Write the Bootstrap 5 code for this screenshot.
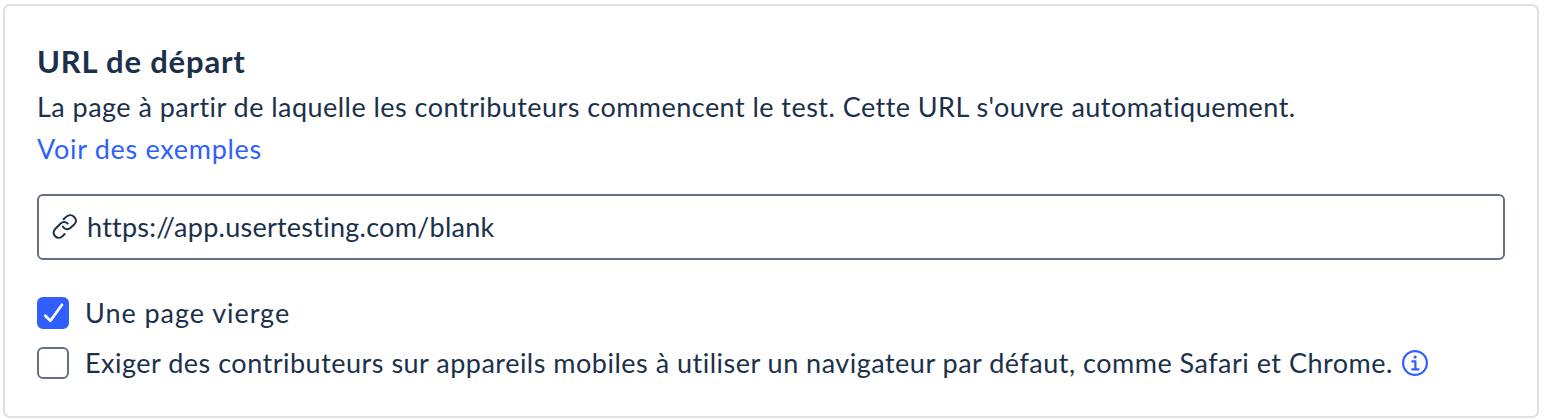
<!DOCTYPE html>
<html lang="fr"><head><meta charset="utf-8"><title>URL de départ</title>
<link href="https://cdn.jsdelivr.net/npm/bootstrap@5.3.0/dist/css/bootstrap.min.css" rel="stylesheet">
<style>
body{background:#fff;color:#1b314b;font-family:Lato,"Open Sans",sans-serif;font-size:27px;line-height:42px;font-variant-ligatures:none;overflow:hidden}
.start-url{margin:4px 5px 2px 3px;height:414px;border:2px solid #dfdfe5;border-radius:7px;padding:34px 32px 0;color:inherit}
.title{font-size:31px;line-height:42px;font-weight:700;letter-spacing:.83px;margin:0 0 4px}
.desc{letter-spacing:.46px}
.examples{color:#315fff;letter-spacing:.7px}
.url-field{height:66px;margin:24px 0 32px;border:2px solid #657086;border-radius:6px;padding:0 13px;font-size:27px;line-height:42px;color:inherit;gap:9px}
.url-text{letter-spacing:.25px}
.option{gap:16px;height:42px}
.option .form-check-input{width:32px;height:32px;margin:0;border:2px solid #657086;border-radius:6px;flex:none}
.option .form-check-input:checked{background-color:#315fff;border-color:#315fff;background-image:none}
.box{width:32px;height:32px}
.tick{position:absolute;left:0;top:0;pointer-events:none}
.opt-a{letter-spacing:.95px}
.opt-b{letter-spacing:.495px}
.info{margin-left:-7px}
</style></head><body>
<main class="card start-url">
<h2 class="title">URL de départ</h2>
<div class="text-nowrap"><span class="desc">La page à partir de laquelle les contributeurs commencent le test. Cette URL s'ouvre automatiquement.</span></div>
<div><a href="#" class="examples text-decoration-none">Voir des exemples</a></div>
<div class="form-control url-field d-flex align-items-center">
<svg width="26" height="26" viewBox="0 0 26 26" fill="none" stroke="#1b314b" stroke-width="2" stroke-linecap="round" stroke-linejoin="round" aria-hidden="true"><path d="M11.6 5.3L13.8 3.1C16.2.7 19.6.4 22 2.7C24.6 5.2 24.6 8 22.2 10.4L18.6 13.8C16 16.2 12.6 15.7 10.8 12.6"/><path d="M15.7 9.6C13.4 7.6 10.6 7.6 8.4 9.8L3.4 14.8C1 17.2 1 20.2 3.2 22.3C5.4 24.5 8.4 24.3 10.6 22.1L12.6 20"/></svg>
<span class="url-text">https://app.usertesting.com/blank</span>
</div>
<div class="option d-flex align-items-center mb-2">
<span class="box position-relative d-flex"><input class="form-check-input" type="checkbox" id="blank" checked><svg class="tick" width="32" height="32" fill="none" stroke="#fff" stroke-width="2.7" stroke-linecap="round" stroke-linejoin="round" aria-hidden="true"><path d="M8.3 18.7L13.4 23.8L25 7.8"/></svg></span>
<label for="blank" class="opt-a">Une page vierge</label>
</div>
<div class="option d-flex align-items-center">
<input class="form-check-input" type="checkbox" id="browser">
<label for="browser" class="opt-b text-nowrap">Exiger des contributeurs sur appareils mobiles à utiliser un navigateur par défaut, comme Safari et Chrome.</label>
<svg class="info" width="26" height="26" viewBox="0 0 26 26" fill="none" stroke="#315fff" stroke-width="2.2" stroke-linecap="round" stroke-linejoin="round" aria-hidden="true"><circle cx="13" cy="13" r="11.9"/><path d="M10.3 11.4H13.4V19.2M10.2 19.3H16.5"/><circle cx="13.1" cy="7.1" r="1.6" fill="#315fff" stroke="none"/></svg>
</div>
</main>
<script src="https://cdn.jsdelivr.net/npm/bootstrap@5.3.0/dist/js/bootstrap.bundle.min.js"></script>
</body></html>
